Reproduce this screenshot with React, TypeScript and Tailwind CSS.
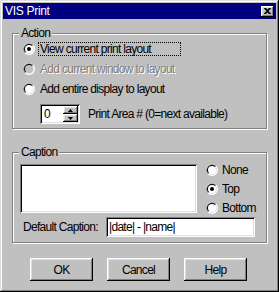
import React from "react";

const raised =
  "shadow-[inset_-1px_-1px_#000,inset_1px_1px_#fff,inset_-2px_-2px_#808080,inset_2px_2px_#dfdfdf]";
const sunken =
  "shadow-[inset_1px_1px_#808080,inset_-1px_-1px_#fff,inset_2px_2px_#000,inset_-2px_-2px_#dfdfdf]";

const Radio: React.FC<{ checked?: boolean; disabled?: boolean }> = ({ checked, disabled }) => (
  <svg width="12" height="12" viewBox="0 0 12 12" className="shrink-0">
    <circle cx="6" cy="6" r="6" fill="#fff" />
    <path d="M1.76 10.24 A6 6 0 0 1 10.24 1.76 Z" fill="#808080" />
    <circle cx="6" cy="6" r="5" fill="#dfdfdf" />
    <path d="M2.46 9.54 A5 5 0 0 1 9.54 2.46 Z" fill="#000" />
    <circle cx="6" cy="6" r="4" fill={disabled ? "#c0c0c0" : "#fff"} />
    {checked && <circle cx="6" cy="6" r="2" fill="#000" />}
  </svg>
);

const GroupBox: React.FC<{ title: string; className?: string; children: React.ReactNode }> = ({
  title,
  className,
  children,
}) => (
  <div
    className={`relative border border-[#808080] shadow-[inset_1px_1px_#fff,1px_1px_#fff] ${className ?? ""}`}
  >
    <span className="absolute left-[6px] top-[-8px] bg-[#c0c0c0] px-[2px] leading-[14px]">{title}</span>
    {children}
  </div>
);

const Button: React.FC<{ label: string }> = ({ label }) => (
  <button className={`w-[63px] h-[23px] bg-[#c0c0c0] ${raised} flex items-center justify-center`}>
    {label}
  </button>
);

export default function App() {
  return (
    <div className="w-[279px] h-[292px] bg-[#c0c0c0] p-[3px] text-[12px] tracking-[-0.7px] text-black [font-family:'Liberation_Sans',Arial,sans-serif] shadow-[inset_-1px_-1px_#000,inset_1px_1px_#dfdfdf,inset_-2px_-2px_#808080,inset_2px_2px_#fff]">
      {/* Title bar */}
      <div className="h-[16px] bg-[#000080] flex items-center justify-between pl-[2px] pr-[2px]">
        <span className="text-white leading-[14px] tracking-[-0.3px]">VIS Print</span>
        <div className={`w-[13px] h-[11px] bg-[#c0c0c0] ${raised} flex items-center justify-center`}>
          <svg width="7" height="6" viewBox="0 0 7 6">
            <path d="M0 0h2l1.5 1.5L5 0h2v0.5L4.5 3 7 5.5V6H5L3.5 4.5 2 6H0v-0.5L2.5 3 0 0.5Z" fill="#000" />
          </svg>
        </div>
      </div>

      <div className="pl-[9px] pt-[14px]">
        {/* Action */}
        <GroupBox title="Action" className="w-[255px] h-[96px] pt-[5px] pl-[10px]">
          <div className="h-[20px] flex items-center">
            <Radio checked />
            <span className="ml-[3px] w-[143px] px-[1px] border border-dotted border-black leading-[12px] whitespace-nowrap">
              View current print layout
            </span>
          </div>
          <div className="h-[20px] flex items-center">
            <Radio disabled />
            <span className="ml-[4px] px-[1px] leading-[14px] text-[#808080] [text-shadow:1px_1px_0_#fff]">
              Add current window to layout
            </span>
          </div>
          <div className="h-[20px] flex items-center">
            <Radio />
            <span className="ml-[4px] px-[1px] leading-[14px]">Add entire display to layout</span>
          </div>
          <div className="mt-[5px] flex items-center ml-[17px]">
            <div className={`w-[40px] h-[20px] bg-white ${sunken} flex p-[2px]`}>
              <span className="flex-1 pl-[2px] leading-[16px]">0</span>
              <div className="w-[15px] flex flex-col">
                <div className={`flex-1 bg-[#c0c0c0] ${raised} flex items-center justify-center`}>
                  <svg width="5" height="3" viewBox="0 0 5 3">
                    <path d="M2.5 0L5 3H0Z" fill="#000" />
                  </svg>
                </div>
                <div className={`flex-1 bg-[#c0c0c0] ${raised} flex items-center justify-center`}>
                  <svg width="5" height="3" viewBox="0 0 5 3">
                    <path d="M0 0H5L2.5 3Z" fill="#000" />
                  </svg>
                </div>
              </div>
            </div>
            <span className="ml-[8px]">Print Area # (0=next available)</span>
          </div>
        </GroupBox>

        {/* Caption */}
        <GroupBox title="Caption" className="mt-[23px] w-[255px] h-[91px] pt-[7px] pl-[7px]">
          <div className="h-[57px] flex">
            <div className={`mt-[4px] w-[177px] h-[49px] bg-white ${sunken}`} />
            <div className="ml-[9px] flex flex-col">
              <div className="h-[19px] flex items-center">
                <Radio />
                <span className="ml-[4px]">None</span>
              </div>
              <div className="h-[19px] flex items-center">
                <Radio checked />
                <span className="ml-[4px]">Top</span>
              </div>
              <div className="h-[19px] flex items-center">
                <Radio />
                <span className="ml-[4px]">Bottom</span>
              </div>
            </div>
          </div>
          <div className="h-[20px] flex items-center">
            <span className="ml-[3px] w-[83px] whitespace-nowrap">Default Caption:</span>
            <div className={`w-[149px] h-[20px] bg-white ${sunken} flex items-center pl-[3px] whitespace-nowrap`}>
              |date| - |name|
            </div>
          </div>
        </GroupBox>

        {/* Buttons */}
        <div className="mt-[15px] ml-[18px] flex gap-[14px]">
          <Button label="OK" />
          <Button label="Cancel" />
          <Button label="Help" />
        </div>
      </div>
    </div>
  );
}
